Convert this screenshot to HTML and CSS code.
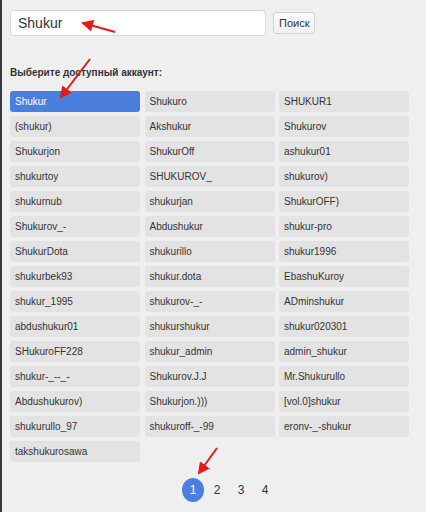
FILE: index.html
```html
<!DOCTYPE html>
<html lang="ru">
<head>
  <meta charset="UTF-8">
  <title>Выбор аккаунта</title>
  <link rel="stylesheet" href="styles.css">
</head>
<body>
  <div class="page">
    <form class="search-form">
      <input type="text" class="search-input" value="Shukur">
      <button type="button" class="search-btn">Поиск</button>
    </form>

    <p class="choose-label">Выберите доступный аккаунт:</p>

    <div class="accounts">
      <div class="account selected">Shukur</div>
      <div class="account">Shukuro</div>
      <div class="account">SHUKUR1</div>
      <div class="account">(shukur)</div>
      <div class="account">Akshukur</div>
      <div class="account">Shukurov</div>
      <div class="account">Shukurjon</div>
      <div class="account">ShukurOff</div>
      <div class="account">ashukur01</div>
      <div class="account">shukurtoy</div>
      <div class="account">SHUKUROV_</div>
      <div class="account">shukurov)</div>
      <div class="account">shukurnub</div>
      <div class="account">shukurjan</div>
      <div class="account">ShukurOFF)</div>
      <div class="account">Shukurov_-</div>
      <div class="account">Abdushukur</div>
      <div class="account">shukur-pro</div>
      <div class="account">ShukurDota</div>
      <div class="account">shukurillo</div>
      <div class="account">shukur1996</div>
      <div class="account">shukurbek93</div>
      <div class="account">shukur.dota</div>
      <div class="account">EbashuKuroy</div>
      <div class="account">shukur_1995</div>
      <div class="account">shukurov-_-</div>
      <div class="account">ADminshukur</div>
      <div class="account">abdushukur01</div>
      <div class="account">shukurshukur</div>
      <div class="account">shukur020301</div>
      <div class="account">SHukuroFF228</div>
      <div class="account">shukur_admin</div>
      <div class="account">admin_shukur</div>
      <div class="account">shukur-_--_-</div>
      <div class="account">Shukurov.J.J</div>
      <div class="account">Mr.Shukurullo</div>
      <div class="account">Abdushukurov)</div>
      <div class="account">Shukurjon.)))</div>
      <div class="account">[vol.0]shukur</div>
      <div class="account">shukurullo_97</div>
      <div class="account">shukuroff-_-99</div>
      <div class="account">eronv-_-shukur</div>
      <div class="account">takshukurosawa</div>
    </div>

    <ul class="pager">
      <li class="active">1</li>
      <li>2</li>
      <li>3</li>
      <li>4</li>
    </ul>
  </div>

  <!-- red annotation arrows -->
  <svg class="arrows" width="426" height="512" viewBox="0 0 426 512">
    <defs>
      <marker id="head" markerWidth="6" markerHeight="6" refX="5" refY="3" orient="auto" markerUnits="strokeWidth">
        <path d="M0,0 L6,3 L0,6 z" fill="#e3191b"/>
      </marker>
    </defs>
    <line x1="115" y1="32" x2="83" y2="23" stroke="#e3191b" stroke-width="2" marker-end="url(#head)"/>
    <line x1="90" y1="59" x2="61" y2="97" stroke="#e3191b" stroke-width="2" marker-end="url(#head)"/>
    <line x1="217" y1="448" x2="199" y2="473" stroke="#e3191b" stroke-width="2" marker-end="url(#head)"/>
  </svg>
</body>
</html>
```

FILE: styles.css
```css
body {
  margin: 0;
  padding: 0;
  background: #efefef;
  font-family: 'Liberation Sans', Arial, sans-serif;
  color: #333;
  min-height: 512px;
  border-left: 2px solid #3a3a3a;
  box-sizing: border-box;
  position: relative;
}

.page {
  padding: 10px 8px;
}

.search-form {
  display: flex;
  align-items: center;
  gap: 7px;
  margin: 0;
}

.search-input {
  width: 256px;
  height: 26px;
  box-sizing: border-box;
  border: 1px solid #d8d8d8;
  border-radius: 4px;
  background: #fff;
  font-family: inherit;
  font-size: 14px;
  color: #333;
  padding: 0 7px;
  outline: none;
}

.search-btn {
  height: 22px;
  padding: 0 5px;
  border: 1px solid #d0d0d0;
  border-radius: 3px;
  background: linear-gradient(#fdfdfd, #f0f0f0);
  font-family: inherit;
  font-size: 11px;
  color: #333;
}

.choose-label {
  margin: 31px 0 0;
  font-size: 10px;
  font-weight: bold;
  color: #333;
  line-height: 12px;
}

.accounts {
  display: grid;
  grid-template-columns: repeat(3, 130px);
  grid-auto-rows: 21px;
  gap: 4px 4.5px;
  margin-top: 12px;
}

.account {
  background: #e3e3e3;
  border-radius: 3px;
  padding: 0 5px;
  font-size: 10px;
  line-height: 21px;
  color: #333;
  white-space: nowrap;
}

.account.selected {
  background: #4a7fdd;
  color: #fff;
}

.pager {
  list-style: none;
  display: flex;
  margin: 16px 0 0 171px;
  padding: 0;
}

.pager li {
  width: 24px;
  height: 24px;
  line-height: 24px;
  text-align: center;
  font-size: 12px;
  color: #333;
}

.pager li.active {
  width: 22px;
  margin: 0 1px;
  border-radius: 50%;
  background: #4a7fdd;
  color: #fff;
}

.arrows {
  position: absolute;
  left: -2px;
  top: 0;
  pointer-events: none;
}
```
